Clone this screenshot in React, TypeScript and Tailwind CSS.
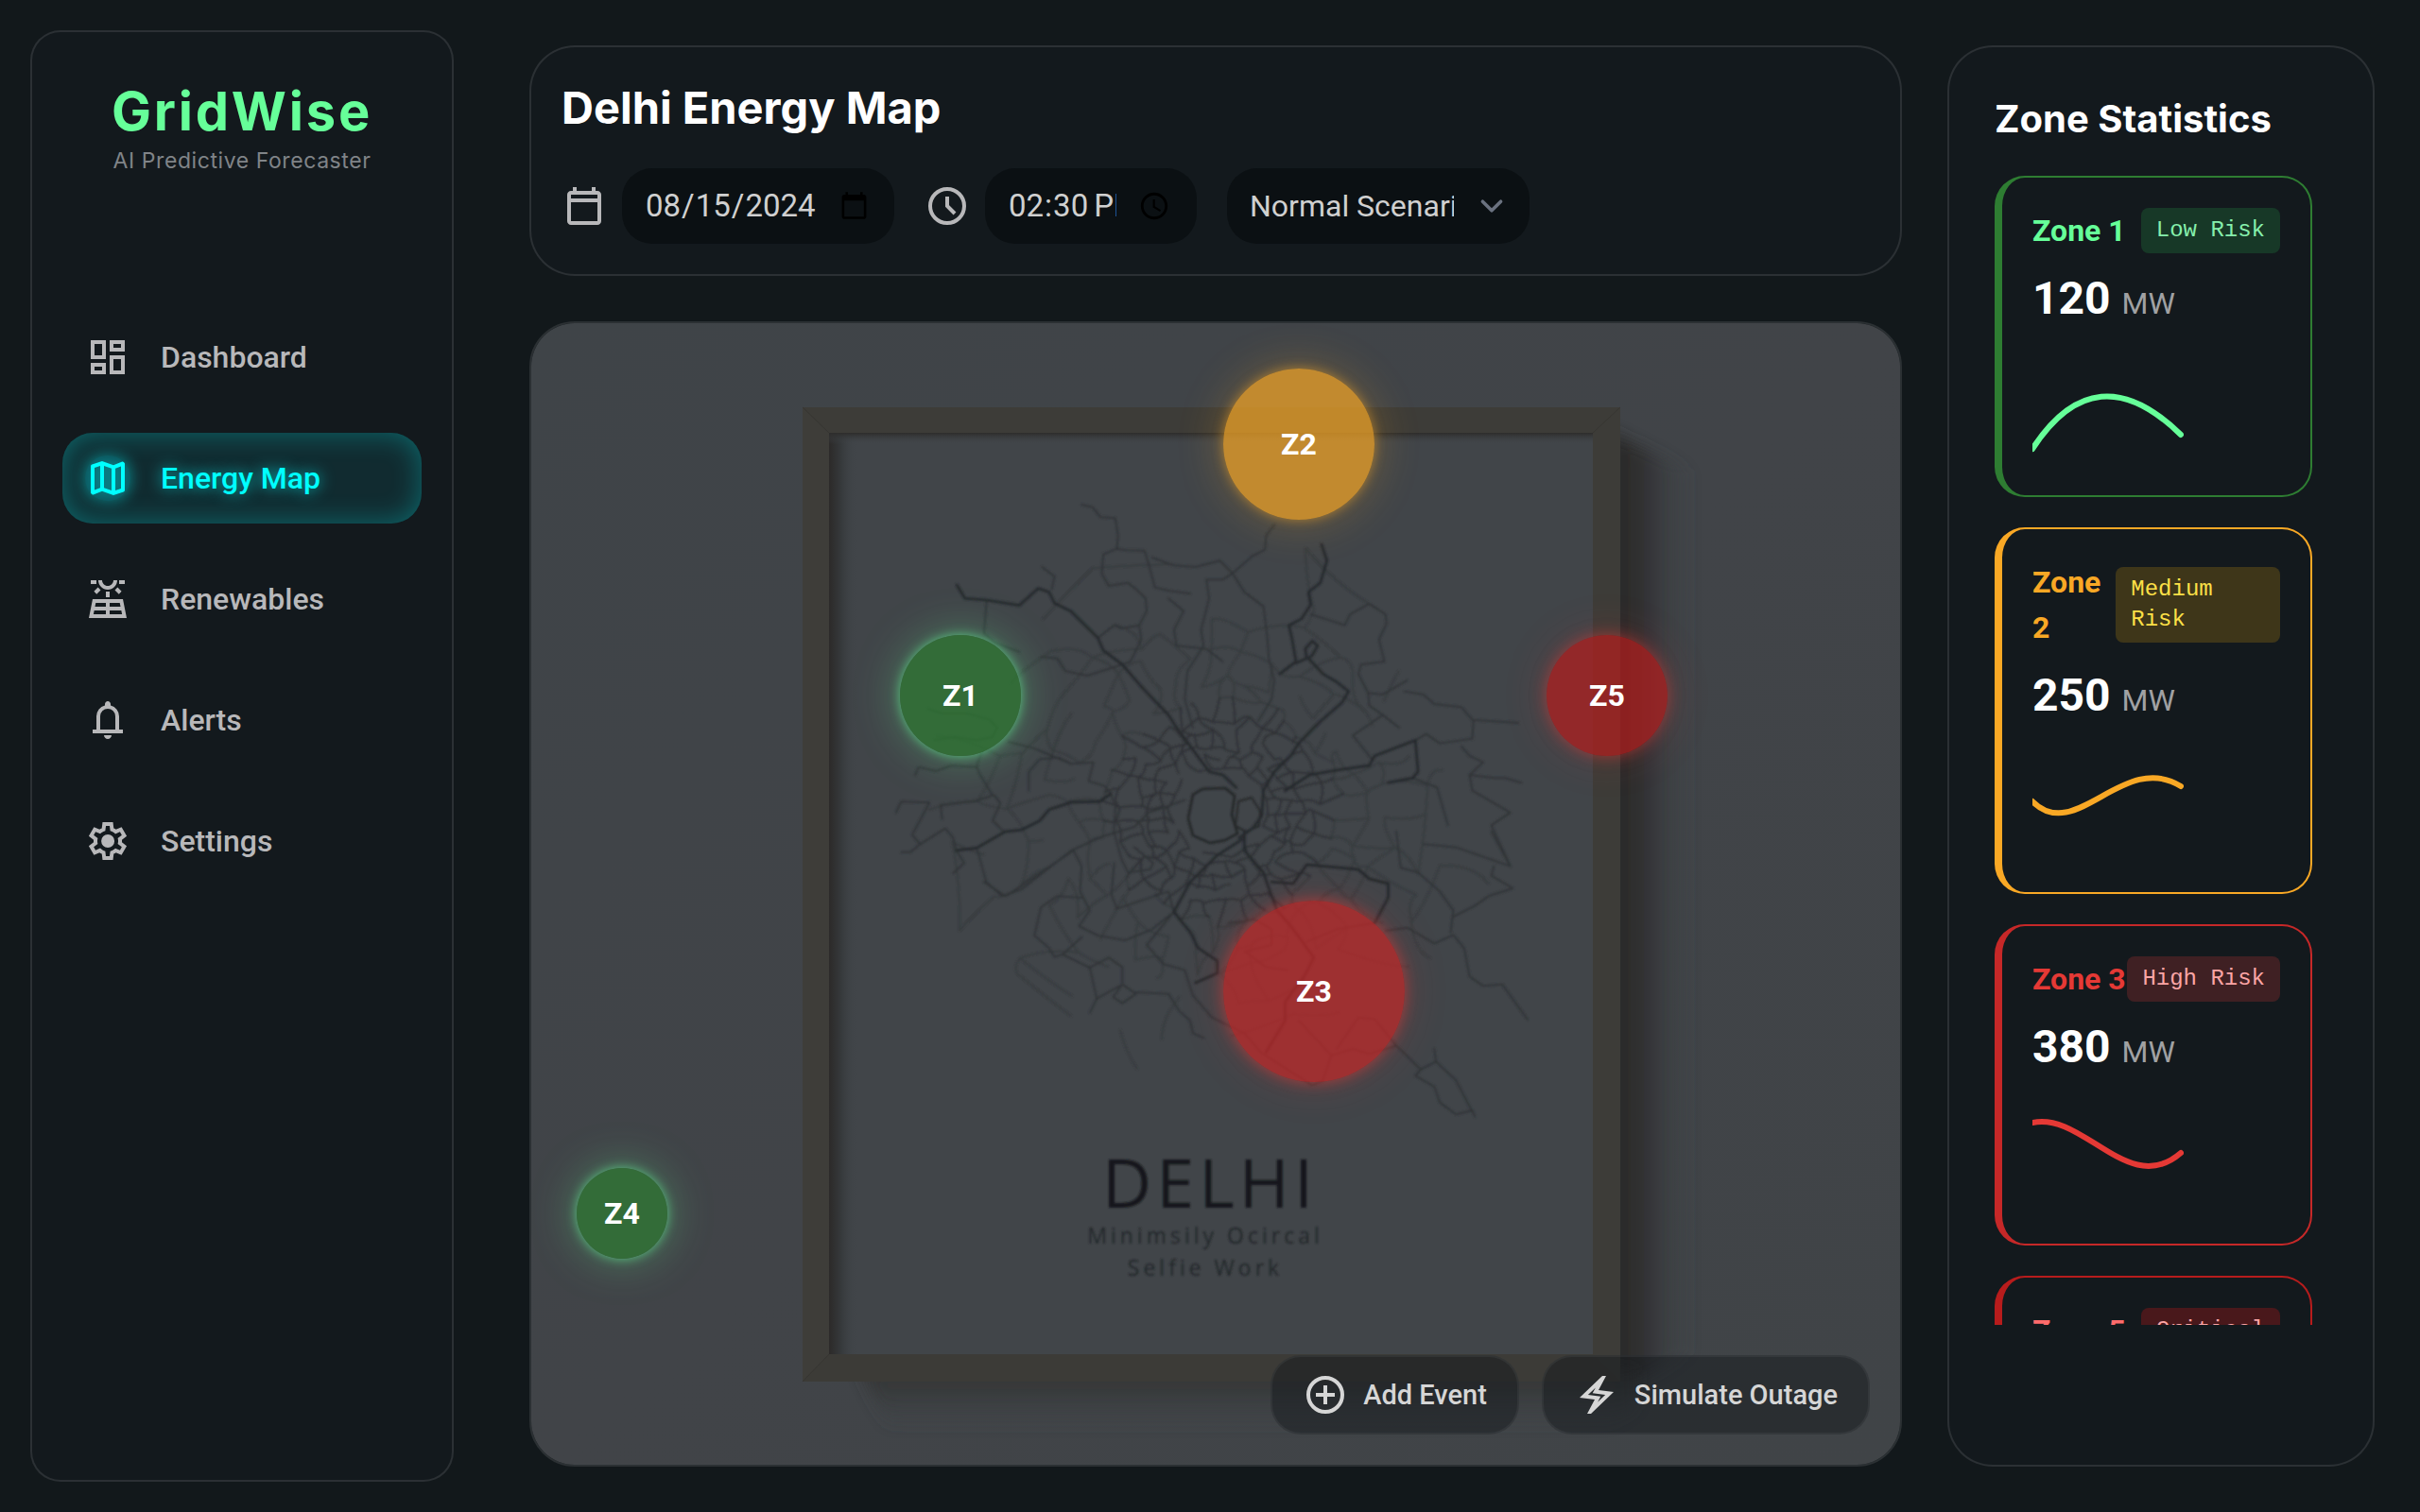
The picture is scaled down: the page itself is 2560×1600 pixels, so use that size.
import React from "react";
import { MdOutlineDashboard, MdOutlineSolarPower } from "react-icons/md";

type IconProps = { className?: string };

/* Outlined symbols drawn on a 960-unit grid whose origin is the bottom left corner. */
function symbol(d: string) {
  return function SymbolIcon({ className = "" }: IconProps) {
    return (
      <svg viewBox="0 -960 960 960" fill="currentColor" aria-hidden="true" className={`size-12 shrink-0 ${className}`}>
        <path d={d} />
      </svg>
    );
  };
}

const MapIcon = symbol(
  "m600-120-240-84-186 72q-20 8-37-4.5T120-170v-560q0-13 7.5-23t20.5-15l212-72 240 84 186-72q20-8 37 4.5t17 33.5v560q0 13-7.5 23T812-192l-212 72Zm-40-98v-468l-160-56v468l160 56Zm80 0 120-40v-474l-120 46v468Zm-440-10 120-46v-468l-120 40v474Z",
);
const BellIcon = symbol(
  "M160-200v-80h80v-280q0-83 50-147.5T420-792v-28q0-25 17.5-42.5T480-880q25 0 42.5 17.5T540-820v28q80 20 130 84.5T720-560v280h80v80H160ZM480-80q-33 0-56.5-23.5T400-160h160q0 33-23.5 56.5T480-80ZM320-280h320v-280q0-66-47-113t-113-47q-66 0-113 47t-47 113v280Z",
);
const GearIcon = symbol(
  "m370-80-16-128q-13-5-24.5-12T307-235l-119 50L78-375l103-78q-1-7-1-13.5v-27q0-6.5 1-13.5L78-585l110-190 119 50q11-8 23-15t24-12l16-128h220l16 128q13 5 24.5 12t22.5 15l119-50 110 190-103 78q1 7 1 13.5v27q0 6.5-2 13.5l103 78-110 190-118-50q-11 8-23 15t-24 12L590-80H370Zm70-80h79l14-106q31-8 57.5-23.5T639-327l99 41 39-68-86-65q5-14 7-29.5t2-31.5q0-16-2-31.5t-7-29.5l86-65-39-68-99 42q-22-23-48.5-38.5T533-694l-13-106h-79l-14 106q-31 8-57.5 23.5T321-633l-99-41-39 68 86 64q-5 15-7 30t-2 32q0 16 2 31t7 30l-86 65 39 68 99-42q22 23 48.5 38.5T427-266l13 106Zm42-180q58 0 99-41t41-99q0-58-41-99t-99-41q-59 0-99.5 41T342-480q0 58 40.5 99t99.5 41Z",
);
const CalendarIcon = symbol(
  "M200-80q-33 0-56.5-23.5T120-160v-560q0-33 23.5-56.5T200-800h40v-80h80v80h320v-80h80v80h40q33 0 56.5 23.5T840-720v560q0 33-23.5 56.5T760-80H200Zm0-80h560v-400H200v400Zm0-480h560v-80H200v80Z",
);
const BoltIcon = symbol(
  "m280-80 160-300-320-40 480-460h80L520-580l320 40L360-80h-80Zm222-247 161-154-269-34 63-117-160 154 268 33-63 118Z",
);

function ClockIcon() {
  return (
    <svg viewBox="0 0 24 24" fill="none" stroke="currentColor" strokeWidth="2" aria-hidden="true" className="size-12 shrink-0">
      <circle cx="12" cy="12" r="9" />
      <path d="M12 7v5l4 4" />
    </svg>
  );
}

function AddIcon() {
  return (
    <svg viewBox="0 0 24 24" fill="none" stroke="currentColor" strokeWidth="2" aria-hidden="true" className="size-12 shrink-0">
      <circle cx="12" cy="12" r="9" />
      <path d="M12 7v10M7 12h10" />
    </svg>
  );
}

const navItems = [
  { label: "Dashboard", icon: <MdOutlineDashboard className="size-12 shrink-0" /> },
  {
    label: "Energy Map",
    active: true,
    icon: <MapIcon className="rounded-full bg-cyan-400/15 shadow-[0_0_16px_rgba(0,255,255,0.2)] drop-shadow-[0_0_8px_rgba(0,255,255,0.6)]" />,
  },
  { label: "Renewables", icon: <MdOutlineSolarPower className="size-12 shrink-0" /> },
  { label: "Alerts", icon: <BellIcon /> },
  { label: "Settings", icon: <GearIcon /> },
];

function Sidebar() {
  return (
    <aside className="m-8 w-[448px] shrink-0 rounded-4xl border-2 border-white/10 bg-[#13191d] p-8">
      <div className="flex flex-col items-center pt-4 font-['Inter']">
        <h1 className="text-[56px] leading-[72px] font-bold tracking-wider text-[#66ff99]">GridWise</h1>
        <p className="text-[23px] leading-8 tracking-wide text-[#808488]">AI Predictive Forecaster</p>
      </div>
      <nav className="mt-[144px] flex flex-col gap-8">
        {navItems.map((item) => (
          <a
            key={item.label}
            href="#"
            aria-current={item.active ? "page" : undefined}
            className={
              item.active
                ? "flex items-center gap-8 rounded-4xl bg-[#112b30] p-6 text-[32px] leading-[48px] font-medium text-[#00ffff] shadow-[inset_0_0_30px_rgba(0,255,255,0.3)] [text-shadow:0_0_16px_rgba(0,255,255,0.7)]"
                : "flex items-center gap-8 rounded-4xl p-6 text-[32px] leading-[48px] font-medium text-[#b8b8ba]"
            }
          >
            {item.icon}
            {item.label}
          </a>
        ))}
      </nav>
    </aside>
  );
}

function Header() {
  return (
    <header className="rounded-[48px] border-2 border-white/10 bg-[#13191d] p-8">
      <h2 className="mb-8 font-['Inter'] text-[47px] leading-[64px] font-bold text-white">Delhi Energy Map</h2>
      <div className="flex items-center gap-8 text-[32px] leading-[48px] text-[#b8b8ba]">
        <label className="flex items-center gap-4">
          <CalendarIcon />
          <input
            type="date"
            aria-label="Date"
            defaultValue="2024-08-15"
            className="h-20 w-72 rounded-4xl bg-[#0b1013] px-6 text-[33px] text-[#d0d0d0]"
          />
        </label>
        <label className="flex items-center gap-4">
          <ClockIcon />
          <input
            type="time"
            aria-label="Time"
            defaultValue="14:30"
            className="h-20 w-56 rounded-4xl bg-[#0b1013] px-6 text-[33px] text-[#d0d0d0] [&::-webkit-datetime-edit]:mr-3"
          />
        </label>
        <div className="relative">
          <select
            aria-label="Scenario"
            className="h-20 w-80 appearance-none rounded-4xl bg-[#0b1013] pr-20 pl-6 text-[#d0d0d0]"
          >
            <option>Normal Scenario</option>
            <option>Heatwave</option>
            <option>Festival Peak</option>
          </select>
          <svg
            viewBox="0 0 20 20"
            fill="none"
            stroke="#6b7280"
            strokeWidth="1.5"
            strokeLinecap="round"
            strokeLinejoin="round"
            aria-hidden="true"
            className="pointer-events-none absolute top-4 right-4 size-12"
          >
            <path d="m6 8 4 4 4-4" />
          </svg>
        </div>
      </div>
    </header>
  );
}

/* Fine street grid: jittered rings around the centre, joined by short curves. */
function buildStreets() {
  let seed = 20240815;
  const rnd = () => {
    seed = (seed * 1664525 + 1013904223) % 4294967296;
    return seed / 4294967296;
  };
  const rings = [
    { r: 48, n: 20, p: 0.8 },
    { r: 58, n: 26, p: 0.82 },
    { r: 69, n: 32, p: 0.82 },
    { r: 82, n: 36, p: 0.82 },
    { r: 97, n: 38, p: 0.78 },
    { r: 116, n: 38, p: 0.72 },
    { r: 140, n: 36, p: 0.68 },
    { r: 168, n: 34, p: 0.62 },
    { r: 200, n: 30, p: 0.52 },
    { r: 236, n: 26, p: 0.34 },
    { r: 272, n: 24, p: 0.2 },
  ];
  const nodes = rings.map(({ r, n }) =>
    Array.from({ length: n }, (_, i) => {
      const a = ((i + rnd() * 0.6) / n) * Math.PI * 2;
      const q = r * (0.93 + rnd() * 0.14);
      return [1290 + Math.cos(a) * q * 1.08, 858 + Math.sin(a) * q] as const;
    }),
  );
  let inner = "";
  let outer = "";
  const join = (a: readonly [number, number], b: readonly [number, number], ring: number) => {
    const w = 5 + ring * 2;
    const mx = (a[0] + b[0]) / 2 + (rnd() - 0.5) * w;
    const my = (a[1] + b[1]) / 2 + (rnd() - 0.5) * w;
    const seg = `M${a[0].toFixed(0)} ${a[1].toFixed(0)}Q${mx.toFixed(0)} ${my.toFixed(0)} ${b[0].toFixed(0)} ${b[1].toFixed(0)}`;
    if (ring < 5) inner += seg;
    else outer += seg;
  };
  nodes.forEach((ring, k) => {
    ring.forEach((node, i) => {
      if (rnd() < rings[k].p) join(node, ring[(i + 1) % ring.length], k);
      const next = nodes[k + 1];
      if (next && rnd() < rings[k].p) {
        const j = Math.round((i / ring.length) * next.length) % next.length;
        join(node, next[j], k);
      }
    });
  });
  return { inner, outer };
}

const streets = buildStreets();

const northRoads = [
  "530,342 550,350 565,382 592,385 597,440 595,482 612,487 646,488 655,540 665,605 690,615 730,625",
  "595,482 570,500 567,560 580,600 615,590 630,610 648,640 650,680 636,725 603,735 590,725 560,765",
  "886,405 870,440 868,485 845,505 808,560 830,620 865,665 872,760 875,830 885,900 880,960 855,1030",
  "660,510 700,535 740,540 785,520 808,560 790,580 760,580 765,640 750,740 755,790 725,870 720,960 735,1050",
  "952,690 1015,725 1025,690 1060,657 1090,690 1092,720 1078,770 1088,840 1045,850 1040,880 1058,940 1085,945 1130,900",
  "1125,935 1160,945 1180,975 1230,985 1250,1025 1335,1035",
  "1140,1210 1185,1240 1205,1360",
  "1145,1090 1165,1070 1190,1100 1250,1085 1252,1030",
  "1058,940 1060,980 1085,1010 1030,1075 1065,1150",
  "1085,1010 1115,1050",
  "1245,1200 1290,1210 1310,1210 1340,1225",
  "1230,1110 1245,1140 1270,1160 1245,1200 1250,1250 1320,1320 1285,1360 1320,1490",
  "457,540 480,570 475,610",
  "355,645 350,750 370,780 415,810",
  "636,725 640,770 620,840 605,850",
  "690,640 718,680 700,740 705,790 760,800 790,840",
  "455,825 485,830 500,870 540,885 605,850",
];
const northMain = [
  "300,597 315,640 355,645 415,662 450,608 470,620 480,655 510,680 560,765 570,805 605,850 640,920 690,1010 705,1050 735,1120 765,1190 790,1200 815,1240",
  "972,468 982,520 970,590 948,620 952,660 935,705 912,725 918,770 925,840 895,880",
  "925,845 945,830 942,800 955,775 965,790 955,820 948,830 975,880 1000,905 1022,935 1010,970 970,1030 930,1100 915,1140 885,1190 865,1250 862,1330 845,1370 820,1400",
  "905,1250 950,1200 1000,1185 1060,1170 1070,1140 1145,1090 1150,1190 1140,1210 1095,1225",
];
const westRoads = [
  "290,740 285,695 400,682 450,665 405,590 400,570 415,530",
  "205,600 215,575 270,588 320,570 400,575",
  "143,720 160,685 250,688 195,790 220,820 300,770 325,800 335,840",
  "160,845 190,845 220,820",
  "335,840 360,880 325,912",
  "455,665 475,690 450,745 485,780",
  "400,832 430,940 480,985 540,965 700,840 800,795 900,765 945,720 1060,680",
  "565,650 565,590 600,550 660,545 700,565",
  "245,390 290,405 370,405 440,425 465,450 450,480 400,490 330,480 265,490",
  "500,495 580,515 640,540 700,565 770,560 755,620 805,635 825,660",
  "825,660 840,700 835,780 860,870 880,910 950,900 960,880 900,830",
];
const westMain = ["335,840 400,832 490,780 540,775 600,745 630,710 700,687 790,685 825,660"];
const southRoads = [
  "700,255 650,360 680,420 720,440 735,520 770,590 830,640 860,700 900,745 955,805 975,790 990,710 930,600",
  "1090,315 1130,305 1180,355 1215,328 1235,370 1245,460 1270,490 1305,485 1352,597",
  "1150,130 1190,190 1215,250 1210,320",
  "1215,270 1255,235 1280,205 1325,180 1285,140 1290,110",
  "1110,680 1155,755 1145,775 1180,810 1190,860 1220,898 1250,885 1255,905",
  "1180,690 1183,730 1220,790 1250,890",
  "1183,730 1155,755",
  "530,210 485,205 455,240 443,330 470,370 480,398 495,390 530,335",
  "495,390 545,432 580,400 605,430 605,485 630,515 605,545 588,525 605,485",
  "545,432 558,530 545,575",
  "558,530 600,490",
  "630,510 690,515 710,570 730,600 735,640 755,655",
  "515,60 530,110 527,190 545,250 525,300 560,330 610,345 660,310 700,255",
  "515,60 390,205 350,160",
  "1160,40 1220,50 1320,110 1285,0",
  "1110,0 1118,115 1150,130",
  "990,710 1030,690 1060,705 1110,680 1070,595 1040,590 1000,690",
  "590,100 585,200 595,245 690,190 700,255",
  "800,290 850,280 880,310 880,360 830,380 870,430 910,440",
  "945,350 1000,310 1070,290",
];
const southMain = [
  "830,0 830,60 865,130 875,180 890,250 920,310 958,400 940,460 905,540 905,600 870,700",
  "830,20 780,75 730,160 700,255 730,320 745,370 780,410 780,450 740,480",
  "880,160 920,165 945,105 1040,120 1060,150 1095,165 1095,210 1070,290",
];

function Roads({ lines, width, color }: { lines: string[]; width: number; color: string }) {
  return (
    <>
      {lines.map((points) => (
        <polyline key={points} points={points} stroke={color} strokeWidth={width} vectorEffect="non-scaling-stroke" />
      ))}
    </>
  );
}

function PosterPhoto() {
  return (
    <svg
      viewBox="562 342 1448 1208"
      preserveAspectRatio="xMidYMid slice"
      aria-hidden="true"
      className="absolute inset-0 size-full"
    >
      <defs>
        <linearGradient id="wall" x1="0" y1="0" x2="1" y2="1">
          <stop offset="0" stopColor="#3f4448" />
          <stop offset="0.5" stopColor="#414448" />
          <stop offset="1" stopColor="#404447" />
        </linearGradient>
        <linearGradient id="side" x1="0" x2="1">
          <stop offset="0" stopColor="#292827" />
          <stop offset="0.35" stopColor="#2e2e2e" />
          <stop offset="0.65" stopColor="#373a3d" stopOpacity="0.7" />
          <stop offset="1" stopColor="#3f4448" stopOpacity="0" />
        </linearGradient>
        <linearGradient id="under" x1="0" y1="0" x2="0" y2="1">
          <stop offset="0" stopColor="#313131" />
          <stop offset="0.5" stopColor="#383b3d" stopOpacity="0.7" />
          <stop offset="1" stopColor="#3f4448" stopOpacity="0" />
        </linearGradient>
        <linearGradient id="innerLeft" x1="0" x2="1">
          <stop offset="0" stopColor="#2c2a29" />
          <stop offset="0.4" stopColor="#35383a" />
          <stop offset="1" stopColor="#404549" stopOpacity="0" />
        </linearGradient>
        <linearGradient id="innerTop" x1="0" y1="0" x2="0" y2="1">
          <stop offset="0" stopColor="#2d2c2b" />
          <stop offset="1" stopColor="#404549" stopOpacity="0" />
        </linearGradient>
        <filter id="soft" x="-100%" y="-20%" width="300%" height="140%">
          <feGaussianBlur stdDeviation="8" />
        </filter>
        <filter id="ink">
          <feGaussianBlur stdDeviation="0.8" />
        </filter>
      </defs>

      <rect x="562" y="342" width="1448" height="1208" fill="url(#wall)" />
      <path d="M1700 455L1790 500V1430L1730 1462H1700Z" fill="url(#side)" filter="url(#soft)" />
      <path d="M910 1450H1730V1490L1700 1512H940Z" fill="url(#under)" filter="url(#soft)" />

      <rect x="849" y="431" width="865" height="1031" fill="#3d3c38" />
      <path d="M849 431 877 458V1433L849 1462Z" fill="#3e3d39" />
      <path d="M849 1462 877 1433H1685L1714 1462Z" fill="#3c3b37" />
      <path d="M849 431 877 458M849 1462 877 1433M1714 431 1685 458" stroke="#373632" strokeWidth="1" />
      <rect x="877" y="458" width="808" height="975" fill="#414549" />
      <rect x="877" y="458" width="30" height="975" fill="url(#innerLeft)" />
      <rect x="877" y="458" width="808" height="12" fill="url(#innerTop)" />

      <g fill="none" strokeLinejoin="round" strokeLinecap="round" filter="url(#ink)">
        <path d={streets.outer} stroke="#2f3336" strokeWidth="2" opacity="0.55" />
        <path d={streets.inner} stroke="#282b2e" strokeWidth="2" opacity="0.7" />
        <path
          d="M1262 841 1272 835 1296 834 1306 842 1303 862 1309 882 1296 889 1280 892 1262 884 1257 866Z"
          fill="#414549"
          stroke="#26292c"
          strokeWidth="3"
        />
        <path d="M1310 848 1324 844 1333 858 1332 874 1318 880 1307 874Z" stroke="#26292c" strokeWidth="2" />
        <g transform="translate(840 420) scale(0.574 0.3333)">
          <Roads lines={northRoads} width={2} color="#303437" />
          <Roads lines={northMain} width={3} color="#282c2f" />
        </g>
        <g transform="translate(900 620) scale(0.3333)">
          <Roads lines={westRoads} width={2} color="#303437" />
          <Roads lines={westMain} width={3} color="#282c2f" />
        </g>
        <g transform="translate(840 880) scale(0.574 0.3333)">
          <Roads lines={southRoads} width={2} color="#303437" />
          <Roads lines={southMain} width={3} color="#282c2f" />
        </g>
      </g>

      <g textAnchor="middle" filter="url(#ink)">
        <text x="1280" y="1278" fontFamily="Open Sans" fontSize="72" letterSpacing="5" fill="#15191c">
          DELHI
        </text>
        <text x="1275" y="1316" fontFamily="Open Sans" fontSize="23" letterSpacing="4" fill="#22272a">
          Minimsily Ocircal
        </text>
        <text x="1275" y="1350" fontFamily="Open Sans" fontSize="23" letterSpacing="4" fill="#22272a">
          Selfie Work
        </text>
      </g>
    </svg>
  );
}

const pins = [
  { label: "Z1", className: "left-[390px] top-[330px] size-32 bg-[#2e7d32]/70 shadow-[0_0_12px_rgba(102,255,153,0.6),0_0_48px_rgba(102,255,153,0.35)]" },
  { label: "Z2", className: "left-[732px] top-[48px] size-40 bg-[#f9a825]/70 shadow-[0_0_12px_rgba(249,168,37,0.5),0_0_48px_rgba(249,168,37,0.3)]" },
  { label: "Z3", className: "left-[732px] top-[611px] size-48 bg-[#c62828]/70 shadow-[0_0_16px_rgba(229,57,53,0.6),0_0_48px_rgba(229,57,53,0.2)]" },
  { label: "Z4", className: "left-[48px] top-[894px] size-24 bg-[#2e7d32]/70 shadow-[0_0_12px_rgba(102,255,153,0.6),0_0_48px_rgba(102,255,153,0.35)]" },
  { label: "Z5", className: "left-[1074px] top-[330px] size-32 bg-[#b71c1c]/70 shadow-[0_0_16px_rgba(229,57,53,0.5),0_0_48px_rgba(229,57,53,0.2)]" },
];

function MapPanel() {
  return (
    <section
      aria-label="Zone map"
      className="relative flex flex-1 items-end justify-end gap-6 overflow-hidden rounded-[48px] border-2 border-[#2b3033] p-8"
    >
      <PosterPhoto />
      {pins.map((pin) => (
        <button
          key={pin.label}
          type="button"
          className={`absolute flex items-center justify-center rounded-full text-[32px] leading-[48px] font-bold text-white ${pin.className}`}
        >
          {pin.label}
        </button>
      ))}
      <button
        type="button"
        className="relative flex items-center gap-4 rounded-4xl border-2 border-white/5 bg-[#14181b]/50 px-8 py-4 text-[29px] leading-10 font-medium text-[#d6d6d6]"
      >
        <AddIcon />
        Add Event
      </button>
      <button
        type="button"
        className="relative flex items-center gap-4 rounded-4xl border-2 border-white/5 bg-[#14181b]/50 px-8 py-4 text-[29px] leading-10 font-medium text-[#d6d6d6]"
      >
        <BoltIcon />
        Simulate Outage
      </button>
    </section>
  );
}

const zones = [
  {
    name: "Zone 1",
    risk: "Low Risk",
    load: 120,
    border: "border-[#2e7d32]",
    title: "text-[#66ff99]",
    badge: "bg-[#173827] text-[#86efac]",
    stroke: "#66ff99",
    path: "M0 111Q67 8 157 96",
  },
  {
    name: "Zone 2",
    risk: "Medium Risk",
    load: 250,
    border: "border-[#f9a825]",
    title: "text-[#f9a825]",
    badge: "bg-[#3e3619] text-[#fde047]",
    stroke: "#f9a825",
    path: "M0 64C46 110 96 10 157 48",
  },
  {
    name: "Zone 3",
    risk: "High Risk",
    load: 380,
    border: "border-[#c62828]",
    title: "text-[#e53935]",
    badge: "bg-[#3f2023] text-[#fca5a5]",
    stroke: "#e53935",
    path: "M0 32C54 20 102 112 157 64",
  },
  {
    name: "Zone 5",
    risk: "Critical",
    load: 450,
    border: "border-[#b71c1c]",
    title: "text-[#ff6b6b]",
    badge: "bg-[#49181b] text-[#fca5a5]",
    stroke: "#ff6b6b",
    path: "M0 80Q60 20 157 24",
  },
];

function Statistics() {
  return (
    <section className="h-[calc(100vh-96px)] rounded-[48px] border-2 border-white/10 bg-[#13191d] p-12">
      <h2 className="mb-8 font-['Inter'] text-[40px] leading-[56px] font-bold text-white">Zone Statistics</h2>
      <div className="flex h-[calc(100vh-384px)] flex-col gap-8 overflow-hidden pr-4">
        {zones.map((zone) => (
          <article key={zone.name} className={`shrink-0 rounded-4xl border-2 border-l-8 p-8 ${zone.border}`}>
            <div className="flex items-center justify-between">
              <h3 className={`text-[32px] leading-[48px] font-bold ${zone.title}`}>{zone.name}</h3>
              <span className={`rounded-lg px-4 py-2 font-['Liberation_Mono'] text-2xl leading-8 ${zone.badge}`}>{zone.risk}</span>
            </div>
            <p className="mt-4 text-5xl leading-[64px] font-bold text-white">
              {zone.load} <span className="text-[32px] leading-[48px] font-normal text-[#a0a1a3]">MW</span>
            </p>
            <svg viewBox="0 0 160 128" aria-hidden="true" className="mt-4 h-32 w-40 overflow-hidden">
              <path d={zone.path} fill="none" stroke={zone.stroke} strokeWidth="6" strokeLinecap="round" />
            </svg>
          </article>
        ))}
      </div>
    </section>
  );
}

export default function App() {
  return (
    <div className="flex min-h-screen bg-[#12181b] font-['Roboto']">
      <Sidebar />
      <main className="grid min-w-0 flex-1 grid-cols-4 gap-12 p-12">
        <div className="col-span-3 flex flex-col gap-12">
          <Header />
          <MapPanel />
        </div>
        <Statistics />
      </main>
    </div>
  );
}
